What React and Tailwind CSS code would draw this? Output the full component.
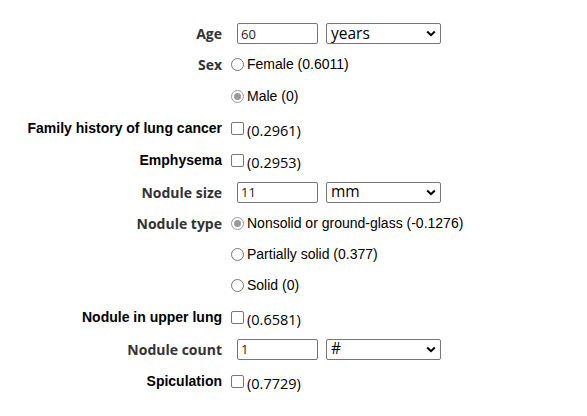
import React from "react";

const openBold = "font-['Open_Sans',sans-serif] font-bold text-[14px] text-[#333]";
const arialBold = "font-['Liberation_Sans',Arial,sans-serif] font-bold text-[14px] text-black";

function Row({ label, labelClass, h, children }) {
  return (
    <div className={`flex items-center ${h}`}>
      <div className={`w-[222px] text-right whitespace-nowrap ${labelClass}`}>{label}</div>
      <div className="ml-[9px] flex items-center">{children}</div>
    </div>
  );
}

function TextSel({ value, unit }) {
  return (
    <div className="flex items-center ml-[6px]">
      <input
        type="text"
        defaultValue={value}
        className="w-[81px] h-[21px] border border-[#767676] rounded-[2px] px-[3px] text-[13px] font-['Open_Sans',sans-serif] text-[#222] outline-none"
      />
      <div className="ml-[8px] w-[115px] h-[21px] border border-[#767676] rounded-[2px] flex items-center justify-between pl-[4px] pr-[4px]">
        <span className="text-[15.5px] font-['Open_Sans',sans-serif] text-black leading-none">{unit}</span>
        <svg width="10" height="7" viewBox="0 0 10 7">
          <path d="M1.2 1.5 L5 5.2 L8.8 1.5" stroke="black" strokeWidth="2" fill="none" />
        </svg>
      </div>
    </div>
  );
}

function Radio({ checked, text }) {
  return (
    <label className="flex items-center">
      <span
        className={`w-[13px] h-[13px] rounded-full border flex items-center justify-center ${
          checked ? "border-[#9a9a9a]" : "border-[#767676]"
        }`}
      >
        {checked && <span className="w-[7px] h-[7px] rounded-full bg-[#9a9a9a]" />}
      </span>
      <span className="ml-[3px] text-[14px] font-['Liberation_Sans',Arial,sans-serif] text-black">{text}</span>
    </label>
  );
}

function Check({ text }) {
  return (
    <label className="flex items-center">
      <span className="w-[13px] h-[13px] rounded-[2px] border border-[#767676] bg-white" />
      <span className="ml-[3px] mt-[6px] text-[14.5px] font-['Open_Sans',sans-serif] text-black">{text}</span>
    </label>
  );
}

export default function App() {
  return (
    <div className="w-[587px] h-[416px] bg-white pt-[18px]">
      <Row label="Age" labelClass={openBold} h="h-[31px]">
        <TextSel value="60" unit="years" />
      </Row>
      <Row label="Sex" labelClass={openBold} h="h-[31px]">
        <Radio text="Female (0.6011)" />
      </Row>
      <Row label="" labelClass={openBold} h="h-[32px]">
        <Radio checked text="Male (0)" />
      </Row>
      <Row label="Family history of lung cancer" labelClass={arialBold} h="h-[32px]">
        <Check text="(0.2961)" />
      </Row>
      <Row label="Emphysema" labelClass={arialBold} h="h-[32px]">
        <Check text="(0.2953)" />
      </Row>
      <Row label="Nodule size" labelClass={openBold} h="h-[32px]">
        <TextSel value="11" unit="mm" />
      </Row>
      <Row label="Nodule type" labelClass={openBold} h="h-[31px]">
        <Radio checked text="Nonsolid or ground-glass (-0.1276)" />
      </Row>
      <Row label="" labelClass={openBold} h="h-[31px]">
        <Radio text="Partially solid (0.377)" />
      </Row>
      <Row label="" labelClass={openBold} h="h-[31px]">
        <Radio text="Solid (0)" />
      </Row>
      <Row label="Nodule in upper lung" labelClass={arialBold} h="h-[32px]">
        <Check text="(0.6581)" />
      </Row>
      <Row label="Nodule count" labelClass={openBold} h="h-[32px]">
        <TextSel value="1" unit="#" />
      </Row>
      <Row label="Spiculation" labelClass={arialBold} h="h-[32px]">
        <Check text="(0.7729)" />
      </Row>
    </div>
  );
}
